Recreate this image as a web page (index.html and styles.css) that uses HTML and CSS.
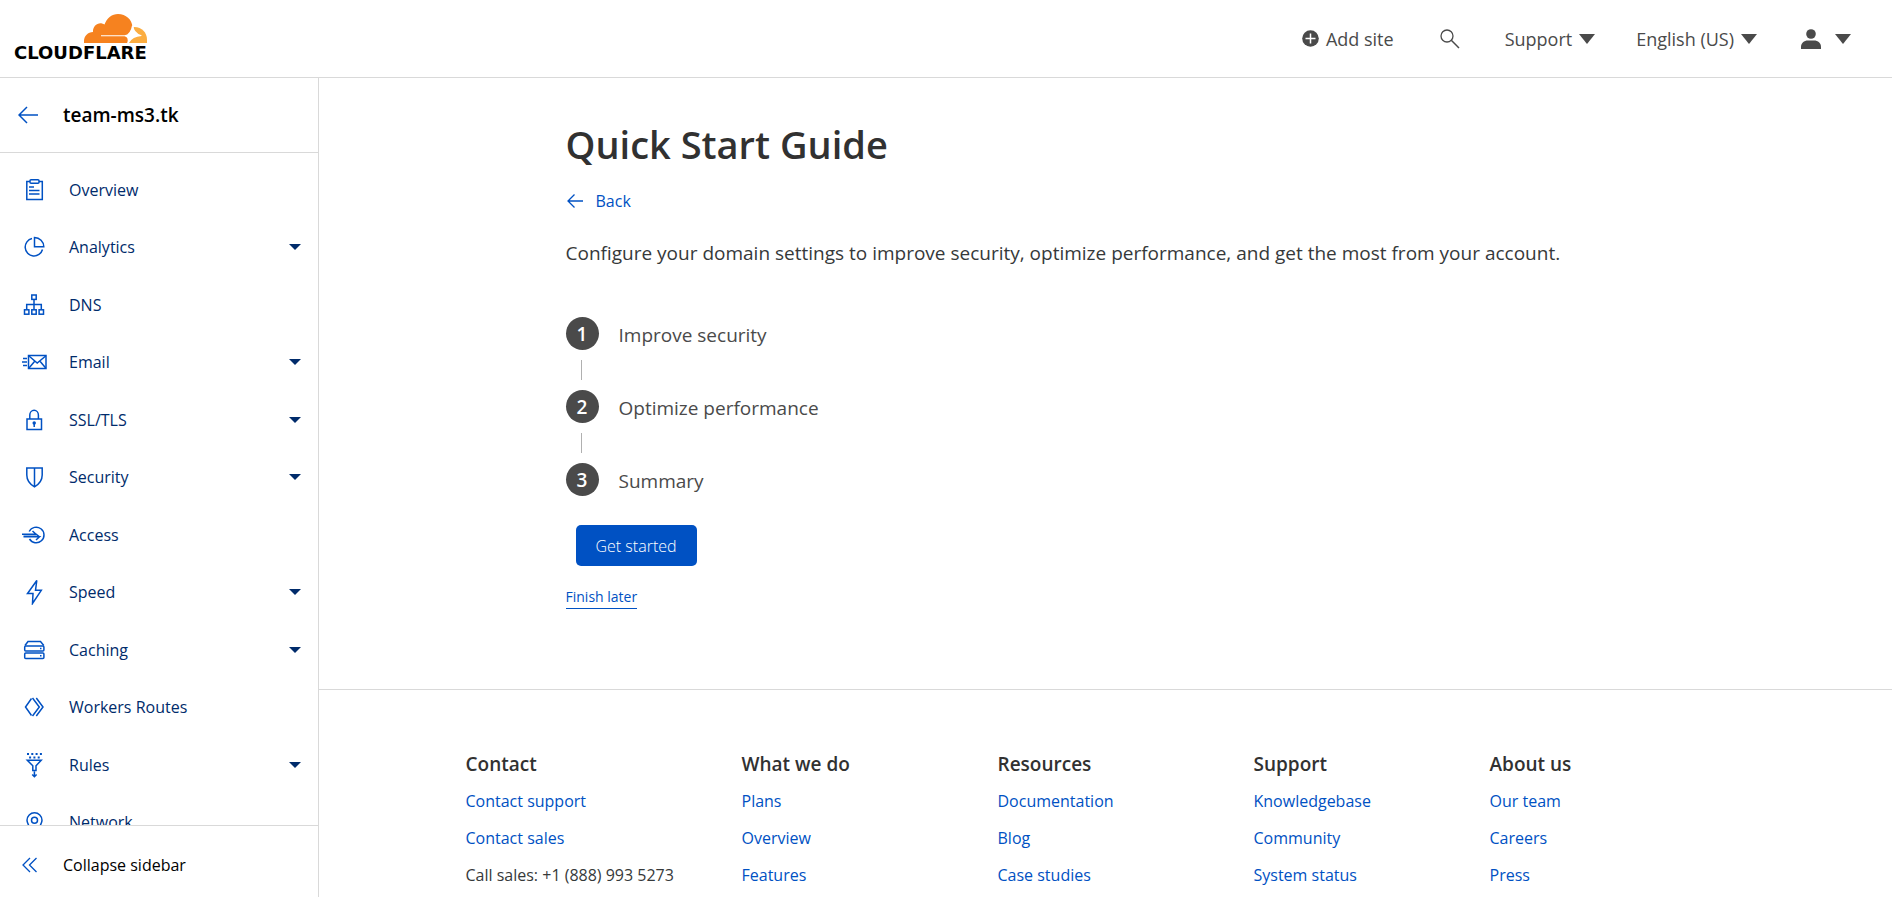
FILE: index.html
```html
<!DOCTYPE html>
<html lang="en">
<head>
<meta charset="utf-8">
<title>Quick Start Guide</title>
<link rel="stylesheet" href="styles.css">
</head>
<body>
<header class="topbar">
  <a class="logo" href="#" aria-label="Cloudflare home">
    <svg class="logo-cloud" viewBox="0 0 63 29" width="63" height="29" aria-hidden="true">
      <path fill="#f6821f" d="M0 29V27C0 22 4 18.200 9 18C8.500 13 13 8.500 18 9.500C19 9.700 20 10 20.500 10.500C23 4 28 0 34 0C42 0 48 5.500 48.500 13L46 22L43.500 29Z"/>
      <path fill="#fbad41" d="M48.500 13C57 12 63 18 63 25.500V29H44V22Z"/>
      <path fill="#fff" d="M48 11.500H49.500Q49.500 18.500 57.500 21.300V22Q48.500 22.500 45 29H43.300Q45 23.500 40.500 22.300H17V21.300H40.500Q46.500 20.500 48 11.500Z"/>
    </svg>
    <span class="logo-word">CLOUDFLARE</span>
  </a>
  <nav class="top-actions" aria-label="Account">
    <a class="action add-site" href="#"><svg viewBox="0 0 17 17" width="17" height="17" aria-hidden="true"><circle cx="8.500" cy="8.500" r="8.300" fill="#4a4a4a"/><path d="M8.500 3.500v10M3.500 8.500h10" stroke="#fff" stroke-width="1.500"/></svg>Add site</a>
    <button class="action search" type="button" aria-label="Search"><svg viewBox="0 0 20 20" width="20" height="20" fill="none" stroke="#4a4a4a" stroke-width="1.300" aria-hidden="true"><circle cx="7" cy="7" r="6"/><path d="M11.300 11.300L19 19" stroke-width="1.500"/></svg></button>
    <button class="action support" type="button">Support<svg class="chev" viewBox="0 0 16 10" width="16" height="10" aria-hidden="true"><path d="M0 0h16L8 10z"/></svg></button>
    <button class="action language" type="button">English (US)<svg class="chev" viewBox="0 0 16 10" width="16" height="10" aria-hidden="true"><path d="M0 0h16L8 10z"/></svg></button>
    <button class="action user" type="button" aria-label="Account menu"><svg viewBox="0 0 20 20" width="20" height="20" fill="#4a4a4a" aria-hidden="true"><circle cx="10" cy="5" r="4.800"/><path d="M0 20v-2c0-4 3-6.500 7-6.500h6c4 0 7 2.500 7 6.500v2z"/></svg><svg class="chev" viewBox="0 0 16 10" width="16" height="10" aria-hidden="true"><path d="M0 0h16L8 10z"/></svg></button>
  </nav>
</header>
<div class="shell">
  <aside class="sidebar">
    <div class="site">
      <a href="#" aria-label="Back to sites"><svg class="line" viewBox="0 0 20 18" width="20" height="18" aria-hidden="true"><path d="M20 9H1M9 1L1 9l8 8"/></svg></a>
      <span class="site-name">team-ms3.tk</span>
    </div>
    <nav class="menu" aria-label="Site">
      <a class="item" href="#"><svg class="line" viewBox="0 0 26 26" width="26" height="26" aria-hidden="true"><path d="M9 4.500H5.800v18h15.500v-18H18"/><rect x="9" y="2.800" width="9" height="3.500" rx="1"/><path d="M8 10h5M8 13.500h10.500M8 17h10.500"/></svg><span>Overview</span></a>
      <a class="item" href="#"><svg class="line" viewBox="0 0 26 26" width="26" height="26" aria-hidden="true"><path d="M11 4.600A8.800 8.800 0 1 0 21.500 15.500"/><path d="M13.500 3.500V12.800H22.800A9.300 9.300 0 0 0 13.500 3.500Z"/></svg><span>Analytics</span><svg class="caret" viewBox="0 0 12 6" width="12" height="6" aria-hidden="true"><path d="M0 0h12L6 6z"/></svg></a>
      <a class="item" href="#"><svg class="line" viewBox="0 0 26 26" width="26" height="26" aria-hidden="true"><rect x="10.800" y="3" width="4.400" height="4.400"/><rect x="3.500" y="17.800" width="4.400" height="4.400"/><rect x="10.800" y="17.800" width="4.400" height="4.400"/><rect x="18.100" y="17.800" width="4.400" height="4.400"/><path d="M13 7.500V17.500M5.700 17.500V12.500H20.300V17.500"/></svg><span>DNS</span></a>
      <a class="item" href="#"><svg class="line" viewBox="0 0 26 26" width="26" height="26" aria-hidden="true"><rect x="7.500" y="6.500" width="17.500" height="13"/><path d="M8 7l8.200 7L24.700 7M8 19l5.500-6.500M24.700 19l-5.500-6.500M2 9.500h4M1 13h5M2 16.500h4"/></svg><span>Email</span><svg class="caret" viewBox="0 0 12 6" width="12" height="6" aria-hidden="true"><path d="M0 0h12L6 6z"/></svg></a>
      <a class="item" href="#"><svg class="line" viewBox="0 0 26 26" width="26" height="26" aria-hidden="true"><rect x="6" y="12" width="14.500" height="10.500"/><path d="M8.800 12V8a4.300 4.700 0 0 1 8.600 0v4M13.200 16v4"/><circle cx="13.200" cy="16" r="1" fill="#0051c3"/></svg><span>SSL/TLS</span><svg class="caret" viewBox="0 0 12 6" width="12" height="6" aria-hidden="true"><path d="M0 0h12L6 6z"/></svg></a>
      <a class="item" href="#"><svg class="line" viewBox="0 0 26 26" width="26" height="26" aria-hidden="true"><path d="M5.800 4H21.200V11C21.200 16 18.500 20 13.500 22.800C8.500 20 5.800 16 5.800 11ZM13.500 4V22.500"/></svg><span>Security</span><svg class="caret" viewBox="0 0 12 6" width="12" height="6" aria-hidden="true"><path d="M0 0h12L6 6z"/></svg></a>
      <a class="item" href="#"><svg class="line" viewBox="0 0 26 26" width="26" height="26" aria-hidden="true"><path d="M8.200 9.500A7.800 7.800 0 1 1 8.500 17"/><path d="M1 12.200H15L11.500 9M2.500 14.800H18.500L15 18M15 12.200l3.500 2.600"/><path d="M2.500 13.500H15" opacity=".45"/></svg><span>Access</span></a>
      <a class="item" href="#"><svg class="line" viewBox="0 0 26 26" width="26" height="26" aria-hidden="true"><path d="M15.800 1.500L6.500 14.500H12L11.500 24.500L20.300 11.300H14.500Z"/></svg><span>Speed</span><svg class="caret" viewBox="0 0 12 6" width="12" height="6" aria-hidden="true"><path d="M0 0h12L6 6z"/></svg></a>
      <a class="item" href="#"><svg class="line" viewBox="0 0 26 26" width="26" height="26" aria-hidden="true"><path d="M4 8.500L7 4.500H19.500L22.800 8.500"/><rect x="3.700" y="9" width="19.200" height="5" rx="1"/><rect x="3.700" y="16" width="19.200" height="5.500" rx="1"/><path d="M19 11.500h1.500M19 18.800h1.500"/></svg><span>Caching</span><svg class="caret" viewBox="0 0 12 6" width="12" height="6" aria-hidden="true"><path d="M0 0h12L6 6z"/></svg></a>
      <a class="item" href="#"><svg class="line" viewBox="0 0 26 26" width="26" height="26" aria-hidden="true"><path d="M10.500 4.500L4.500 13l6 8.500M11.500 4L18.300 13l-6.800 9M15.300 4L22 13l-6.700 9"/></svg><span>Workers Routes</span></a>
      <a class="item" href="#"><svg class="line" viewBox="0 0 26 26" width="26" height="26" aria-hidden="true"><path stroke-width="2" d="M6 2h2M10.300 2h2M14.600 2h2M18.900 2h2M8.100 5.500h2M12.400 5.500h2M16.700 5.500h2"/><path d="M6.300 8.300H20.200L15 13.800V18.500H11.800V13.800ZM13.400 19.500V24.500M11.200 22.500l2.200 2.200l2.200-2.200"/></svg><span>Rules</span><svg class="caret" viewBox="0 0 12 6" width="12" height="6" aria-hidden="true"><path d="M0 0h12L6 6z"/></svg></a>
      <a class="item" href="#"><svg class="line" viewBox="0 0 26 26" width="26" height="26" aria-hidden="true"><path d="M13.500 24C9 19 6 15.500 6 11.300a7.500 7.500 0 0 1 15 0C21 15.500 18 19 13.500 24Z"/><circle cx="13.500" cy="11.300" r="3"/></svg><span>Network</span></a>
    </nav>
    <button class="collapse" type="button"><svg class="line thin" viewBox="0 0 16 16" width="16" height="16" aria-hidden="true"><path d="M8 1L1 8l7 7M14.500 1L7.500 8l7 7"/></svg>Collapse sidebar</button>
  </aside>
  <div class="page">
    <main class="guide">
      <h1>Quick Start Guide</h1>
      <a class="back" href="#"><svg class="line thin" viewBox="0 0 17 14" width="17" height="14" aria-hidden="true"><path d="M17 7H2M8.500 .5L2 7l6.500 6.500"/></svg>Back</a>
      <p class="intro">Configure your domain settings to improve security, optimize performance, and get the most from your account.</p>
      <ol class="steps">
        <li><span class="num">1</span><span class="step-name">Improve security</span></li>
        <li><span class="num">2</span><span class="step-name">Optimize performance</span></li>
        <li><span class="num">3</span><span class="step-name">Summary</span></li>
      </ol>
      <button class="start" type="button">Get started</button>
      <a class="later" href="#">Finish later</a>
    </main>
    <footer class="footer">
      <div class="columns">
        <section><h2>Contact</h2><ul><li><a href="#">Contact support</a></li><li><a href="#">Contact sales</a></li><li>Call sales: +1 (888) 993 5273</li></ul></section>
        <section><h2>What we do</h2><ul><li><a href="#">Plans</a></li><li><a href="#">Overview</a></li><li><a href="#">Features</a></li></ul></section>
        <section><h2>Resources</h2><ul><li><a href="#">Documentation</a></li><li><a href="#">Blog</a></li><li><a href="#">Case studies</a></li></ul></section>
        <section><h2>Support</h2><ul><li><a href="#">Knowledgebase</a></li><li><a href="#">Community</a></li><li><a href="#">System status</a></li></ul></section>
        <section><h2>About us</h2><ul><li><a href="#">Our team</a></li><li><a href="#">Careers</a></li><li><a href="#">Press</a></li></ul></section>
      </div>
    </footer>
  </div>
</div>
</body>
</html>
```
FILE: styles.css
```css
* { box-sizing: border-box; }
body {
  margin: 0;
  height: 100vh;
  display: flex;
  flex-direction: column;
  overflow: hidden;
  background: #fff;
  color: #36393a;
  font-family: "Open Sans", "Noto Sans", sans-serif;
  font-size: 16px;
  font-weight: 400;
  line-height: 24px;
}
a { color: #0051c3; text-decoration: none; }
button { font: inherit; color: inherit; border: 0; padding: 0; background: none; cursor: pointer; }
svg { display: block; flex: none; }
h1, h2, p, ul, ol { margin: 0; padding: 0; }
ul, ol { list-style: none; }
.line { fill: none; stroke: #0051c3; stroke-width: 1.5; }
.thin { stroke-width: 1.3; }

.topbar {
  flex: none;
  display: flex;
  justify-content: space-between;
  align-items: center;
  height: 78px;
  padding: 0 41px 0 14px;
  border-bottom: 1px solid #d9d9d9;
}
.logo { display: flex; flex-direction: column; align-items: flex-end; color: #000; }
.logo-word { font: 700 18px/20px "DejaVu Sans", sans-serif; }
.top-actions { display: flex; align-items: center; color: #4a4a4a; font-size: 18px; }
.action { display: flex; align-items: center; gap: 7px; color: #4a4a4a; }
.search { margin-left: 46px; }
.support { margin-left: 45px; }
.language { margin-left: 41px; }
.user { margin-left: 44px; gap: 14px; }
.chev { fill: #4a4a4a; }

.shell { flex: 1; min-height: 0; display: flex; }
.sidebar { flex: none; width: 319px; display: flex; flex-direction: column; border-right: 1px solid #d9d9d9; }
.site { flex: none; display: flex; align-items: center; gap: 25px; height: 75px; padding-left: 18px; border-bottom: 1px solid #d9d9d9; }
.site-name { color: #000; font-size: 19px; font-weight: 600; }
.menu { flex: 1; min-height: 0; overflow: hidden; padding-top: 8px; display: grid; grid-auto-rows: 57px 58px; }
.item { display: flex; align-items: center; padding: 0 17px 0 21px; gap: 22px; color: #002b6b; }
.caret { margin-left: auto; fill: #002b6b; }
.collapse { flex: none; display: flex; align-items: center; gap: 25px; height: 72px; padding: 6px 0 0 22px; border-top: 1px solid #d9d9d9; color: #000; }

.page { flex: 1; min-width: 0; overflow: hidden; }
.guide { max-width: 1080px; margin: 0 auto; padding: 36px 0 80px; display: flex; flex-direction: column; align-items: flex-start; }
h1 { font-size: 38px; font-weight: 600; line-height: 60px; color: #313131; }
.back { display: flex; align-items: center; gap: 13px; margin-top: 15px; }
.intro { margin-top: 24px; font-size: 19px; line-height: 32px; }
.steps { margin-top: 48px; font-size: 19px; color: #4a4a4a; }
.steps li { display: flex; align-items: center; gap: 20px; height: 33px; }
.steps li + li { margin-top: 40px; }
.steps li + li .num::before { content: ""; position: absolute; left: 15px; bottom: 43px; height: 20px; border-left: 1px solid #b0b0b0; }
.num { position: relative; display: grid; place-items: center; width: 33px; height: 33px; border-radius: 50%; background: #4a4a4a; color: #fff; font-weight: 600; }
.step-name { padding-top: 3px; }
.start { margin: 29px 0 0 10px; height: 41px; padding: 0 20px; border-radius: 5px; background: #0051c3; color: #fff; font-weight: 300; }
.later { margin-top: 20px; font-size: 14px; line-height: 22px; border-bottom: 1px solid #0051c3; }

.footer { border-top: 1px solid #d9d9d9; padding: 60px 0; }
.columns { max-width: 1280px; margin: 0 auto; display: grid; grid-template-columns: 69fr 64fr 64fr 59fr 64fr; }
h2 { font-size: 19px; line-height: 28px; font-weight: 600; color: #313131; margin-bottom: 11px; }
.columns ul { display: grid; gap: 13px; }
```
